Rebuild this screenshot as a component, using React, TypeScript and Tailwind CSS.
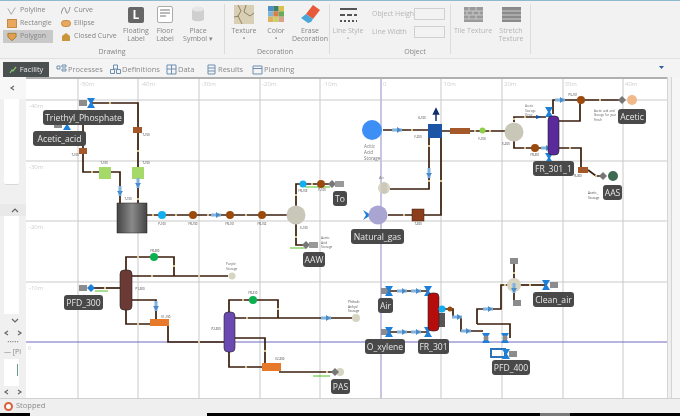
import React from "react";

const FONT = "'Open Sans', 'Liberation Sans', sans-serif";
const GRID_X = [78, 138, 199, 260, 320, 441, 502, 563, 623];
const GRID_Y = [99, 160, 220, 281];

const tabs = [
  { name: "Processes", w: "w-[54px]", icon: "M1 2h3v3H1zM6 1h4v2H6zM6 5h4v2H6z" },
  { name: "Definitions", w: "w-[56px]", icon: "M3.500 1h4v4h-4zM.5 5.500h4v4h-4zM6.500 5.500h4v4h-4z" },
  { name: "Data", w: "w-[40px]", icon: "M1 1h9v9H1zM1 5h9M5.500 1v9" },
  { name: "Results", w: "w-[46px]", icon: "M2 1h7v9H2zM2 4h7M2 7h7" },
  { name: "Planning", w: "w-[50px]", icon: "M1 2h9v8H1zM1 4.500h9" },
];

// pipes as polylines, page coordinates
const pipes = [
  "91,102 138,102 138,202",
  "83,115 83,171 120,171 120,202",
  "147,214 296,214",
  "296,205 296,183 332,183",
  "296,223 296,244 306,244",
  "383,129 430,129",
  "442,130 505,130",
  "390,188 429,188 429,135",
  "388,214 441,214 441,137",
  "514,121 514,116 546,116",
  "514,140 514,147 548,147",
  "553,113 553,99 622,99",
  "580,99 580,120 558,120",
  "558,147 581,147 581,169",
  "588,169 596,175 603,175",
  "91,287 120,287",
  "126,269 126,256 174,256 174,275",
  "132,275 228,275",
  "132,299 156,299 156,318",
  "126,309 126,323 150,323",
  "168,325 168,341 224,341",
  "229,311 229,299 278,299 278,317",
  "235,317 352,317",
  "235,337 265,337 265,362",
  "229,351 229,366 262,366",
  "279,371 335,371",
  "386,290 428,290",
  "386,331 428,331",
  "439,308 453,308 453,316 461,316 461,330 483,330",
  "477,323 477,308 501,308 501,284 510,284",
  "477,323 510,323 510,337",
  "514,260 514,302",
  "520,284 546,284",
];

// the small pale joints along the pipes
const ticks = [
  [110, 102], [138, 150], [138, 198], [92, 171], [153, 214], [176, 214], [208, 214], [246, 214],
  [296, 194], [312, 183], [296, 236], [412, 129], [429, 145], [429, 180], [441, 180], [404, 214],
  [475, 130], [490, 130], [514, 118], [525, 116], [525, 147], [600, 99], [570, 147], [596, 175],
  [105, 287], [138, 256], [174, 265], [152, 275], [199, 275], [138, 323], [199, 341], [243, 299],
  [278, 308], [247, 317], [265, 350], [246, 366], [327, 371], [505, 284], [530, 284], [514, 272],
];

const tags = [
  { t: "Triethyl_Phosphate", x: 43, y: 109, w: 81 },
  { t: "Acetic_acid", x: 33, y: 130, w: 53 },
  { t: "To", x: 333, y: 190, w: 14 },
  { t: "AAW", x: 303, y: 251, w: 22 },
  { t: "Natural_gas", x: 351, y: 228, w: 53 },
  { t: "FR_301_1", x: 533, y: 160, w: 41 },
  { t: "Acetic", x: 618, y: 108, w: 28 },
  { t: "AAS", x: 603, y: 184, w: 19 },
  { t: "PFD_300", x: 64, y: 294, w: 39 },
  { t: "Air", x: 378, y: 297, w: 15 },
  { t: "O_xylene", x: 365, y: 338, w: 40 },
  { t: "FR_301", x: 418, y: 338, w: 31 },
  { t: "Clean_air", x: 533, y: 291, w: 41 },
  { t: "PFD_400", x: 492, y: 359, w: 38 },
  { t: "PAS", x: 331, y: 378, w: 19 },
];

const tiny = [
  { t: "T-100", x: 75, y: 155 }, { t: "T-100", x: 146, y: 135 }, { t: "T-100", x: 104, y: 163 },
  { t: "T-100", x: 146, y: 163 }, { t: "T-100", x: 128, y: 199 }, { t: "P-100", x: 162, y: 224 },
  { t: "FR-100", x: 193, y: 224 }, { t: "FR-101", x: 230, y: 224 }, { t: "FR-102", x: 262, y: 224 },
  { t: "E-100", x: 304, y: 228 }, { t: "FR-103", x: 303, y: 191 }, { t: "P-100", x: 322, y: 190 },
  { t: "F-200", x: 418, y: 137 }, { t: "K-100", x: 422, y: 118 }, { t: "T-300", x: 418, y: 224 },
  { t: "F-100", x: 482, y: 139 }, { t: "E-200", x: 506, y: 144 }, { t: "FR-301", x: 535, y: 155 },
  { t: "PS-101", x: 573, y: 95 }, { t: "R-300", x: 578, y: 176 }, { t: "P1-300", x: 140, y: 289 },
  { t: "E1-100", x: 166, y: 317 }, { t: "FR-300", x: 155, y: 251 }, { t: "P2-300", x: 216, y: 329 },
  { t: "E2-300", x: 280, y: 359 }, { t: "FR-310", x: 253, y: 293 },
];

const notes = [
  { lines: ["Acitic", "Acid", "Storage"], x: 364, y: 147, size: 4.6, fill: "#777" },
  { lines: ["Air"], x: 379, y: 178, size: 4, fill: "#777" },
  { lines: ["Acetic_acid_and", "Storage_for_your", "Finish"], x: 594, y: 111, size: 2.8, fill: "#555" },
  { lines: ["Acetic_", "Storage"], x: 588, y: 193, size: 3.2, fill: "#555" },
  { lines: ["Acetic", "Acid", "Storage"], x: 321, y: 238, size: 3.2, fill: "#666" },
  { lines: ["Acetic", "Storage", "Dryer"], x: 525, y: 106, size: 3, fill: "#666" },
  { lines: ["Purple", "Storage"], x: 226, y: 264, size: 3.2, fill: "#666" },
  { lines: ["Phthalic", "Anhyd", "Storage"], x: 348, y: 302, size: 3.2, fill: "#555" },
];

const Valve = ({ x, y, c = "#1e7fd8" }: { x: number; y: number; c?: string }) => (
  <path d={`M${x - 4} ${y - 5}h8l-3 5 3 5h-8l3-5z`} fill={c} />
);

const Arrow = ({ x, y, up }: { x: number; y: number; up?: boolean }) => (
  <g transform={`translate(${x} ${y}) rotate(${up ? 90 : 0})`}>
    <rect x={-5} y={-1.5} width={10} height={3} fill="#7fb2de" />
    <path d="M0 -3L4.500 0L0 3z" fill="#4a8bc8" />
  </g>
);

const Diamond = ({ x, y, c = "#777" }: { x: number; y: number; c?: string }) => (
  <path d={`M${x - 4} ${y}L${x} ${y - 4}L${x + 4} ${y}L${x} ${y + 4}z`} fill={c} />
);

const Box = ({ x, y }: { x: number; y: number }) => (
  <rect x={x} y={y} width={8} height={6} fill="#8c8c8c" />
);

const Column = ({ x, y, w, h, fill }: { x: number; y: number; w: number; h: number; fill: string }) => (
  <rect x={x} y={y} width={w} height={h} rx={4} fill={fill} stroke="#222" strokeWidth={0.6} />
);

function Diagram() {
  return (
    <svg viewBox="26 78 641 319" className="block w-[641px] h-[319px]">
      <defs>
        <linearGradient id="tank" x1="0" x2="1" y1="0" y2="0">
          <stop offset="0" stopColor="#444" />
          <stop offset="0.5" stopColor="#8a8a8a" />
          <stop offset="1" stopColor="#444" />
        </linearGradient>
      </defs>
      {GRID_X.map((x) => (
        <line key={x} x1={x} x2={x} y1={78} y2={397} stroke="#c9c9c9" />
      ))}
      <line x1={381} x2={381} y1={78} y2={397} stroke="#8f8bcc" />
      {GRID_Y.map((y) => (
        <line key={y} x1={26} x2={667} y1={y} y2={y} stroke="#c9c9c9" />
      ))}
      <line x1={26} x2={667} y1={341} y2={341} stroke="#6f6bc0" />

      <g fontSize={6} fill="#cfcfcf">
        {["-50m", "-40m", "-30m", "-20m", "-10m"].map((t, i) => (
          <text key={t} x={80 + i * 60.7} y={85}>{t}</text>
        ))}
        {["0", "10m", "20m", "30m", "40m"].map((t, i) => (
          <text key={t} x={383 + i * 60.5} y={85}>{t}</text>
        ))}
        {["-40m", "-30m", "-20m", "-10m"].map((t, i) => (
          <text key={t} x={29} y={107 + i * 60.5}>{t}</text>
        ))}
        <text x={28} y={349}>0</text>
      </g>

      <g fill="none" stroke="#3a1e0c" strokeWidth={1.7}>
        {pipes.map((p) => (
          <polyline key={p} points={p} />
        ))}
      </g>
      <g fill="#d8c48a">
        {ticks.map(([x, y]) => (
          <rect key={`${x}-${y}`} x={x - 1} y={y - 1} width={2} height={2} />
        ))}
      </g>
      <g stroke="#4fc01f" strokeWidth={1}>
        <line x1={305} x2={330} y1={186} y2={186} />
        <line x1={290} x2={306} y1={247} y2={247} />
        <line x1={95} x2={108} y1={290} y2={290} />
        <line x1={313} x2={330} y1={375} y2={375} />
      </g>

      {/* upper left feed and tank */}
      <Box x={79} y={99} />
      <Valve x={91} y={102} />
      <Box x={54} y={121} />
      <Valve x={67} y={124} />
      <rect x={133} y={126} width={9} height={6} fill="#a5582a" />
      <rect x={79} y={147} width={8} height={6} fill="#a5582a" />
      <rect x={99} y={166} width={12} height={12} fill="#a5d96a" />
      <rect x={132} y={166} width={12} height={12} fill="#a5d96a" />
      <Arrow x={120} y={190} up />
      <Arrow x={138} y={182} up />
      <rect x={117} y={202} width={30} height={30} fill="url(#tank)" stroke="#222" strokeWidth={0.5} />
      <circle cx={162} cy={214} r={4} fill="#12aef0" />
      <circle cx={193} cy={214} r={4} fill="#9c4a0c" />
      <Arrow x={216} y={214} />
      <circle cx={230} cy={214} r={4} fill="#9c4a0c" />
      <circle cx={262} cy={214} r={4} fill="#9c4a0c" />
      <circle cx={296} cy={214} r={9.5} fill="#c9c7b8" />
      <circle cx={303} cy={183} r={3.5} fill="#12aef0" />
      <circle cx={321} cy={183} r={4} fill="#9c4a0c" />
      <Diamond x={332} y={183} />
      <rect x={335} y={180} width={9} height={6} fill="#999" />
      <Diamond x={306} y={244} />
      <rect x={309} y={241} width={9} height={6} fill="#999" />

      {/* middle feeds */}
      <circle cx={372} cy={129} r={10} fill="#3d8ef5" />
      <Arrow x={397} y={129} />
      <rect x={428} y={123} width={14} height={14} fill="#1c55a5" />
      <path d="M436 120V111M433.500 113L436 108L438.500 113z" stroke="#10306a" strokeWidth={1.5} fill="#10306a" />
      <Arrow x={429} y={172} up />
      <circle cx={384} cy={187} r={6} fill="#d7d4c2" />
      <path d="M382 182v10M384 181v12M386 182v10" stroke="#aaa" strokeWidth={0.5} />
      <path d="M363 209l8 5-8 5 3-5z" fill="#1e7fd8" />
      <circle cx={378} cy={214} r={9.5} fill="#a9a5d2" />
      <rect x={412} y={208} width={12} height={12} fill="#8c3d1c" stroke="#40200e" strokeWidth={0.5} />

      {/* upper right column */}
      <rect x={450} y={127} width={20} height={6} fill="#a5582a" />
      <circle cx={482.500} cy={129.500} r={3} fill="#8ed04a" />
      <circle cx={514} cy={131} r={9.5} fill="#c9c7b8" />
      <path d="M536 114l6 2-6 2z" fill="#1c55a5" />
      <circle cx={535} cy={147} r={4} fill="#9c4a0c" />
      <Arrow x={546} y={147} />
      <Valve x={549} y={111} />
      <Valve x={549} y={157} />
      <Column x={548} y={115} w={11} h={39} fill="#5a2a9a" />
      <Arrow x={560} y={99} />
      <circle cx={581} cy={99} r={4} fill="#9c4a0c" />
      <Diamond x={622} y={99} />
      <circle cx={632} cy={99} r={5} fill="#f0b98a" />
      <rect x={578} y={166} width={10} height={6} fill="#a5582a" />
      <Diamond x={603} y={175} />
      <circle cx={613} cy={175} r={5} fill="#3d6a50" />

      {/* lower left */}
      <Box x={79} y={284} />
      <Diamond x={91} y={287} c="#1e7fd8" />
      <Column x={120} y={269} w={12} h={40} fill="#6b3a34" />
      <circle cx={154} cy={256} r={4} fill="#0cb050" />
      <Arrow x={156} y={305} up />
      <rect x={150} y={318} width={19} height={7} fill="#e67a2a" />
      <circle cx={232} cy={275} r={3.5} fill="#d7d4c2" />
      <Column x={224} y={311} w={11} h={40} fill="#6a4ab0" />
      <circle cx={253} cy={299} r={4} fill="#0cb050" />
      <Arrow x={326} y={317} />
      <circle cx={356} cy={317} r={4} fill="#d7d4c2" />
      <rect x={262} y={362} width={19} height={8} fill="#e67a2a" />
      <circle cx={340} cy={371} r={4} fill="#d7d4c2" />
      <Diamond x={335} y={371} />

      {/* lower right */}
      <Box x={381} y={287} />
      <Box x={381} y={328} />
      <Valve x={389} y={290} />
      <Valve x={389} y={331} />
      <Valve x={428} y={290} />
      <Valve x={428} y={331} />
      <Arrow x={402} y={290} />
      <Arrow x={416} y={290} />
      <Arrow x={402} y={331} />
      <Arrow x={416} y={331} />
      <rect x={439} y={312} width={6} height={14} fill="#555" />
      <Column x={428} y={292} w={11} h={38} fill="#b50c0c" />
      <circle cx={442} cy={308} r={3.5} fill="#12aef0" />
      <circle cx={450} cy={308} r={2.500} fill="#9c4a0c" />
      <Arrow x={457} y={316} />
      <Arrow x={466} y={330} />
      <Arrow x={488} y={308} />
      <Valve x={486} y={337} />
      <Valve x={505} y={337} />
      <circle cx={486} cy={337} r={2.500} fill="#8c8c8c" />
      <circle cx={505} cy={337} r={2.500} fill="#8c8c8c" />
      <rect x={491} y={348} width={14} height={8} fill="none" stroke="#2d72b8" strokeWidth={2} />
      <Valve x={506} y={353} />
      <Box x={509} y={350} />
      <circle cx={514} cy={284} r={7} fill="#d7d4c2" />
      <Arrow x={514} y={287} up />
      <Box x={510} y={257} />
      <Box x={513} y={299} />
      <Valve x={546} y={284} />
      <Box x={550} y={281} />

      <g fontSize={2.8} fill="#333" textAnchor="middle">
        {tiny.map((n) => (
          <text key={n.t + n.x} x={n.x} y={n.y}>{n.t}</text>
        ))}
      </g>
      {notes.map((n) => (
        <text key={n.x} x={n.x} y={n.y} fontSize={n.size} fill={n.fill}>
          {n.lines.map((l, i) => (
            <tspan key={i} x={n.x} dy={i === 0 ? 0 : n.size + 1.5}>{l}</tspan>
          ))}
        </text>
      ))}

      {tags.map((n) => (
        <g key={n.t}>
          <rect x={n.x} y={n.y} width={n.w} height={15} rx={3} fill="#494949" />
          <text x={n.x + n.w / 2} y={n.y + 11} fontSize={8.6} fill="#e8e8e8" textAnchor="middle">{n.t}</text>
        </g>
      ))}
    </svg>
  );
}

const BigBtn = ({ w, icon, lines }: { w: string; icon: React.ReactNode; lines: string[] }) => (
  <div className={`${w} flex flex-col items-center shrink-0`}>
    <div className="h-[20px] flex items-center justify-center">{icon}</div>
    <div className="mt-[3px] text-center leading-[8px] whitespace-nowrap">
      {lines.map((l) => (
        <div key={l}>{l}</div>
      ))}
    </div>
  </div>
);

const Sep = () => <div className="w-px h-[50px] bg-[#dcdcdc] shrink-0" />;

function Ribbon() {
  return (
    <div className="h-[58px] shrink-0 flex items-start pt-[3px] text-[7px] text-[#858585] bg-[#f2f2f2] border-t border-[#8fb9cf]">
      {/* Drawing */}
      <div className="w-[224px] shrink-0 flex flex-col">
        <div className="flex h-[44px]">
          <div className="w-[57px] pl-[3px] flex flex-col">
            <div className="h-[13px] flex items-center gap-[3px] pl-[4px]">
              <svg width="10" height="11" viewBox="0 0 12 11"><path d="M1 3l4 7 5-8" fill="none" stroke="#999" /></svg>
              Polyline
            </div>
            <div className="h-[13px] flex items-center gap-[3px] pl-[4px]">
              <span className="w-[10px] h-[9px] bg-[#e8a860] border border-[#c58a40]" />
              Rectangle
            </div>
            <div className="w-[50px] h-[13px] flex items-center gap-[3px] pl-[4px] bg-[#c9c9c9]">
              <svg width="10" height="10" viewBox="0 0 11 10"><path d="M1 1h9v4l-4.500 4L1 5z" fill="#e0a050" stroke="#a87a30" /></svg>
              Polygon
            </div>
          </div>
          <div className="w-[63px] pl-[4px] flex flex-col">
            <div className="h-[13px] flex items-center gap-[3px]">
              <svg width="10" height="11" viewBox="0 0 10 11"><path d="M0 9C2 1 4 1 5 6s3 1 4-4" fill="none" stroke="#888" /></svg>
              Curve
            </div>
            <div className="h-[13px] flex items-center gap-[3px]">
              <span className="w-[10px] h-[7px] rounded-full bg-[#e8a860] border border-[#c58a40]" />
              Ellipse
            </div>
            <div className="h-[13px] flex items-center gap-[3px]">
              <svg width="10" height="10" viewBox="0 0 10 10"><path d="M1 9V4l4-3 4 3v5z" fill="#c9963c" /></svg>
              <span className="whitespace-nowrap">Closed Curve</span>
            </div>
          </div>
          <BigBtn
            w="w-[32px]"
            lines={["Floating", "Label"]}
            icon={<span className="w-[16px] h-[16px] mt-[2px] rounded-[2px] bg-[#666] text-white text-[12px] font-bold flex items-center justify-center">L</span>}
          />
          <BigBtn
            w="w-[26px]"
            lines={["Floor", "Label"]}
            icon={
              <svg width="16" height="17" viewBox="0 0 16 17">
                <rect x=".5" y=".5" width="15" height="16" rx="1.500" fill="#fff" stroke="#aaa" />
                <path d="M3 4h10M3 7h10M3 10h6" stroke="#777" />
              </svg>
            }
          />
          <BigBtn
            w="w-[40px]"
            lines={["Place", "Symbol ▾"]}
            icon={
              <svg width="14" height="16" viewBox="0 0 14 16">
                <path d="M1 3v10c0 3 12 3 12 0V3z" fill="#cfcfcf" />
                <ellipse cx="7" cy="3" rx="6" ry="2.500" fill="#e6e6e6" />
              </svg>
            }
          />
        </div>
        <div className="text-center leading-[8px]">Drawing</div>
      </div>
      <Sep />
      {/* Decoration */}
      <div className="w-[104px] shrink-0 flex flex-col">
        <div className="flex h-[44px] pl-[2px]">
          <BigBtn
            w="w-[34px]"
            lines={["Texture", "•"]}
            icon={
              <svg width="20" height="19" viewBox="0 0 20 19">
                <rect width="20" height="19" fill="#d9cfb4" />
                <path d="M4 0l3 6-3 5 4 8M12 0l-2 7 6 4 4-3M0 12l5-1" stroke="#8d8264" fill="none" />
              </svg>
            }
          />
          <BigBtn
            w="w-[30px]"
            lines={["Color", "•"]}
            icon={
              <svg width="16" height="16" viewBox="0 0 15 15">
                <rect width="5" height="5" fill="#4f8fc8" />
                <rect x="5" width="5" height="5" fill="#3f7f6a" />
                <rect x="10" width="5" height="5" fill="#d9c24a" />
                <rect y="5" width="5" height="5" fill="#7fb6d8" />
                <rect x="5" y="5" width="5" height="5" fill="#d97f4a" />
                <rect x="10" y="5" width="5" height="5" fill="#6aa85a" />
                <rect y="10" width="5" height="5" fill="#e0b060" />
                <rect x="5" y="10" width="5" height="5" fill="#c9d06a" />
                <rect x="10" y="10" width="5" height="5" fill="#d9a08a" />
              </svg>
            }
          />
          <BigBtn
            w="w-[38px]"
            lines={["Erase", "Decoration"]}
            icon={
              <svg width="20" height="18" viewBox="0 0 20 18">
                <path d="M13 0l7 5-7 9-7-5z" fill="#e8583a" />
                <path d="M6 9l7 5-2 3-3 1-7-5z" fill="#4aa8d8" />
              </svg>
            }
          />
        </div>
        <div className="text-center leading-[8px] pr-[4px]">Decoration</div>
      </div>
      <Sep />
      {/* Object */}
      <div className="w-[120px] shrink-0 flex flex-col text-[#b5b5b5]">
        <div className="flex h-[44px]">
          <BigBtn
            w="w-[36px]"
            lines={["Line Style", "•"]}
            icon={
              <svg width="19" height="17" viewBox="0 0 19 17">
                <path d="M1 3h17" stroke="#555" strokeWidth="2" />
                <path d="M1 9h17" stroke="#555" strokeWidth="2" strokeDasharray="5 2" />
                <path d="M1 15h17" stroke="#555" strokeWidth="2" strokeDasharray="2 2" />
              </svg>
            }
          />
          <div className="ml-[6px] flex flex-col gap-[6px] pt-[4px]">
            <div className="flex items-center">
              <span className="w-[42px] whitespace-nowrap">Object Height</span>
              <span className="w-[31px] h-[12px] border border-[#d0d0d0] bg-[#f2f2f2]" />
            </div>
            <div className="flex items-center">
              <span className="w-[42px] whitespace-nowrap">Line Width</span>
              <span className="w-[31px] h-[12px] border border-[#d0d0d0] bg-[#f2f2f2]" />
            </div>
          </div>
        </div>
        <div className="text-center leading-[8px] pl-[50px] text-[#858585]">Object</div>
      </div>
      <Sep />
      <div className="flex pl-[3px] text-[#b5b5b5]">
        <BigBtn
          w="w-[38px]"
          lines={["Tile Texture"]}
          icon={
            <svg width="19" height="15" viewBox="0 0 19 15">
              <rect width="19" height="15" fill="#9a9a9a" />
              <path d="M0 4h19M0 8h19M0 12h19M5 0v4M12 0v4M3 4v4M9 4v4M15 4v4M5 8v4M12 8v4" stroke="#dcdcdc" strokeWidth=".7" />
            </svg>
          }
        />
        <BigBtn
          w="w-[38px]"
          lines={["Stretch", "Texture"]}
          icon={
            <svg width="19" height="15" viewBox="0 0 19 15">
              <rect width="19" height="15" fill="#8a8a8a" />
              <path d="M0 4h19M0 8h19M0 12h19" stroke="#dcdcdc" strokeWidth=".8" />
            </svg>
          }
        />
      </div>
      <Sep />
    </div>
  );
}

const Chevron = ({ d }: { d: string }) => (
  <svg width="8" height="6" viewBox="0 0 8 6"><path d={d} fill="none" stroke="#666" strokeWidth="1.200" /></svg>
);

const Arrows = () => (
  <div className="h-[12px] flex items-center gap-[4px] pl-[3px] text-[#555]">
    <Chevron d="M5 1L2 3l3 2" />
    <Chevron d="M3 1l3 2-3 2" />
  </div>
);

function SidePanel() {
  return (
    <div className="w-[26px] shrink-0 flex flex-col bg-[#f0f0f0]">
      <div className="h-[22px] flex items-center justify-center bg-[#f7f7f7]">
        <Chevron d="M5 1L2 3l3 2" />
      </div>
      <div className="h-[87px] ml-[4px] mr-[7px] bg-white rounded-b-[2px] border-b border-[#d8d8d8]" />
      <div className="h-[19px]" />
      <div className="h-[12px] flex items-center justify-end pr-[7px] bg-[#e9e9e9]">
        <Chevron d="M1 5l3-3 3 3" />
      </div>
      <div className="h-[99px] ml-[4px] mr-[7px] bg-white" />
      <div className="h-[13px] flex items-center justify-end pr-[7px]">
        <Chevron d="M1 2l3 3 3-3" />
      </div>
      <Arrows />
      <div className="h-[7px] flex items-center justify-center text-[#888] text-[6px] leading-none">•••••</div>
      <div className="h-[14px] flex items-center pl-[4px] gap-[2px] text-[7px] text-[#888]">— [Pi</div>
      <div className="h-[27px] ml-[4px] mr-[7px] bg-white flex justify-end pr-[1px] pt-[5px]">
        <span className="w-px h-[12px] bg-[#6a9a8a]" />
      </div>
      <Arrows />
    </div>
  );
}

export default function App() {
  return (
    <div
      className="w-[680px] h-[416px] flex flex-col overflow-hidden bg-[#f0f0f0] blur-[0.4px]"
      style={{ fontFamily: FONT }}
    >
      <Ribbon />

      {/* tab strip */}
      <div className="h-[19px] shrink-0 flex items-end pl-[3px] text-[7.5px] text-[#8a8a8a] bg-[#f4f4f4] border-t border-[#e0e0e0] pr-[16px]">
        <div className="w-[46px] h-[15px] flex items-center justify-center gap-[3px] bg-[#4a4f4f] text-[#e6e6e6]">
          <svg width="8" height="8" viewBox="0 0 8 8"><path d="M1 7l2-3 1 1 3-4" fill="none" stroke="#7fc06a" strokeWidth="1.300" /></svg>
          Facility
        </div>
        <div className="w-[7px]" />
        {tabs.map((t) => (
          <div key={t.name} className={`${t.w} h-[15px] flex items-center gap-[1px] shrink-0`}>
            <svg width="11" height="11" viewBox="0 0 11 11">
              <path d={t.icon} fill="none" stroke="#6f8fb0" />
            </svg>
            {t.name}
          </div>
        ))}
        <div className="flex-1" />
        <div className="h-[15px] flex items-start pt-[4px]">
          <svg width="5" height="3" viewBox="0 0 5 3"><path d="M0 0h5L2.500 3z" fill="#2d5f9a" /></svg>
        </div>
      </div>

      {/* main area */}
      <div className="flex-1 min-h-0 flex">
        <SidePanel />
        <div className="w-[641px] shrink-0 flex flex-col border-t-2 border-[#b0b0b0] bg-white">
          <Diagram />
        </div>
        <div className="flex-1 flex">
          <div className="w-[4px] border-l border-[#d5d5d5] bg-[#efefef]" />
          <div className="flex-1 border-l border-[#d5d5d5] bg-[#f6f6f6]" />
        </div>
      </div>

      {/* status bar */}
      <div className="h-[15px] shrink-0 flex items-center gap-[3px] pl-[4px] text-[7.5px] text-[#8a8a8a] bg-[#efefef] border-t border-[#d0d0d0]">
        <span className="w-[9px] h-[9px] rounded-full border-2 border-[#d9603a] bg-white" />
        Stopped
      </div>
      <div className="h-[3px] shrink-0 flex">
        <div className="w-[30px] bg-black" />
        <div className="w-[177px] bg-[#efefef]" />
        <div className="w-[333px] bg-black" />
        <div className="w-[30px] bg-[#777]" />
        <div className="flex-1 bg-black" />
      </div>
    </div>
  );
}
